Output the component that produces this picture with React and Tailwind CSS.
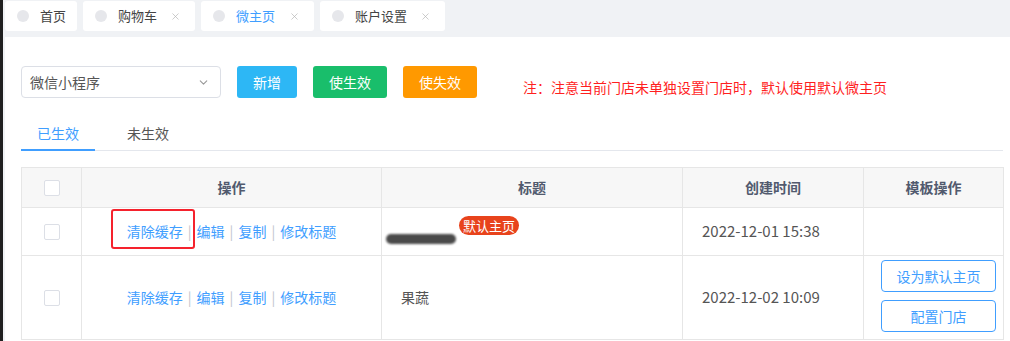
import React from 'react';
import { X, ChevronDown } from 'lucide-react';

const font = { fontFamily: '"Noto Sans CJK SC", "Noto Sans", sans-serif' };

const tabs = [
  { name: '首页', w: 'w-[72px]', closable: false },
  { name: '购物车', w: 'w-[112px]', closable: true },
  { name: '微主页', w: 'w-[113px]', closable: true, active: true },
  { name: '账户设置', w: 'w-[125px]', closable: true },
];

const rows = [
  { id: 1, title: '', isDefault: true, created: '2022-12-01 15:38', h: 'h-[48px]' },
  { id: 2, title: '果蔬', isDefault: false, created: '2022-12-02 10:09', h: 'h-[84px]' },
];

const Checkbox = () => (
  <span className="inline-block w-[16px] h-[16px] border border-[#dcdfe6] rounded-[2px] bg-white" />
);

const Links = ({ highlight }) => (
  <div className="relative flex items-center justify-center text-[14px] text-[#409eff] whitespace-nowrap">
    {highlight && (
      <span className="absolute left-[29px] top-[-12px] w-[84px] h-[40px] border-2 border-[#f5222d] rounded-[3px]" />
    )}
    <span>清除缓存</span>
    <span className="mx-[5px] text-[#c0c4cc]">|</span>
    <span>编辑</span>
    <span className="mx-[5px] text-[#c0c4cc]">|</span>
    <span>复制</span>
    <span className="mx-[5px] text-[#c0c4cc]">|</span>
    <span>修改标题</span>
  </div>
);

export default function App() {
  return (
    <div className="flex w-[1010px] h-[341px] overflow-hidden bg-[#f0f2f5]" style={font}>
      <div className="w-[3px] bg-[#1f1f1f]" />
      <div className="flex-1 flex flex-col pl-[2px]">
        {/* tag bar */}
        <div className="h-[37px] pt-[1px] flex gap-[6px]">
          {tabs.map((t) => (
            <div key={t.name} className={`${t.w} shrink-0 h-[30px] bg-white rounded-[3px] flex items-center pl-[12px] pr-[14px] text-[13px] whitespace-nowrap`}>
              <span className="w-[12px] h-[12px] shrink-0 rounded-full bg-[#e6e7eb]" />
              <span className={`ml-[11px] ${t.active ? 'text-[#409eff]' : 'text-[#444]'}`}>{t.name}</span>
              {t.closable && <X size={11} className="ml-auto text-[#b4b4b4]" strokeWidth={1.5} />}
            </div>
          ))}
        </div>

        {/* content */}
        <div className="flex-1 bg-white pl-[16px] pt-[29px]">
          <div className="flex items-start">
            <div className="w-[200px] h-[32px] border border-[#dcdfe6] rounded-[4px] flex items-center pl-[8px] pr-[10px] text-[14px] text-[#555]">
              <span>微信小程序</span>
              <ChevronDown size={13} className="ml-auto text-[#999]" />
            </div>
            <button className="ml-[16px] w-[60px] h-[32px] rounded-[3px] bg-[#2db7f5] text-white text-[14px]">新增</button>
            <button className="ml-[16px] w-[74px] h-[32px] rounded-[3px] bg-[#19be6b] text-white text-[14px]">使生效</button>
            <button className="ml-[16px] w-[74px] h-[32px] rounded-[3px] bg-[#ff9900] text-white text-[14px]">使失效</button>
            <span className="ml-[46px] mt-[11px] text-[14px] text-[#ff1f1f] whitespace-nowrap">注：注意当前门店未单独设置门店时，默认使用默认微主页</span>
          </div>

          {/* tabs */}
          <div className="mt-[25px] w-[982px] flex border-b border-[#e4e7ed] h-[28px]">
            <div className="w-[74px] flex justify-center text-[14px] text-[#409eff] border-b-2 border-[#409eff] -mb-[1px]">已生效</div>
            <div className="ml-[32px] text-[14px] text-[#555]">未生效</div>
          </div>

          {/* table */}
          <table className="mt-[16px] w-[982px] border-collapse table-fixed text-[14px] text-[#555]">
            <colgroup>
              <col className="w-[60px]" />
              <col className="w-[300px]" />
              <col className="w-[301px]" />
              <col className="w-[181px]" />
              <col className="w-[140px]" />
            </colgroup>
            <thead>
              <tr className="h-[40px] bg-[#f7f7f7]">
                <th className="border border-[#e6e6e6] font-normal"><div className="flex justify-center"><Checkbox /></div></th>
                <th className="border border-[#e6e6e6] font-bold text-[#515a6e]">操作</th>
                <th className="border border-[#e6e6e6] font-bold text-[#515a6e]">标题</th>
                <th className="border border-[#e6e6e6] font-bold text-[#515a6e]">创建时间</th>
                <th className="border border-[#e6e6e6] font-bold text-[#515a6e]">模板操作</th>
              </tr>
            </thead>
            <tbody>
              {rows.map((r) => (
                <tr key={r.id} className={r.h}>
                  <td className="border border-[#e6e6e6]"><div className="flex justify-center"><Checkbox /></div></td>
                  <td className="border border-[#e6e6e6]"><Links highlight={r.id === 1} /></td>
                  <td className="border border-[#e6e6e6] pl-[19px]">
                    {r.isDefault ? (
                      <div className="relative h-[30px]">
                        <span className="absolute left-[-15px] top-[17px] w-[70px] h-[10px] rounded-full bg-[#4a4a4a] blur-[1px]" />
                        <span className="absolute left-[58px] top-[-1px] px-[4px] h-[19px] leading-[19px] rounded-full bg-[#e8431c] text-white text-[13px] whitespace-nowrap">默认主页</span>
                      </div>
                    ) : (
                      <span>{r.title}</span>
                    )}
                  </td>
                  <td className="border border-[#e6e6e6] pl-[19px] text-[15px] whitespace-nowrap">{r.created}</td>
                  <td className="border border-[#e6e6e6] pl-[17px] align-top pt-[4px]">
                    {!r.isDefault && (
                      <div className="flex flex-col gap-[8px]">
                        <button className="w-[115px] h-[32px] border border-[#409eff] rounded-[4px] text-[#409eff] text-[14px]">设为默认主页</button>
                        <button className="w-[115px] h-[32px] border border-[#409eff] rounded-[4px] text-[#409eff] text-[14px]">配置门店</button>
                      </div>
                    )}
                  </td>
                </tr>
              ))}
            </tbody>
          </table>
        </div>
      </div>
    </div>
  );
}
